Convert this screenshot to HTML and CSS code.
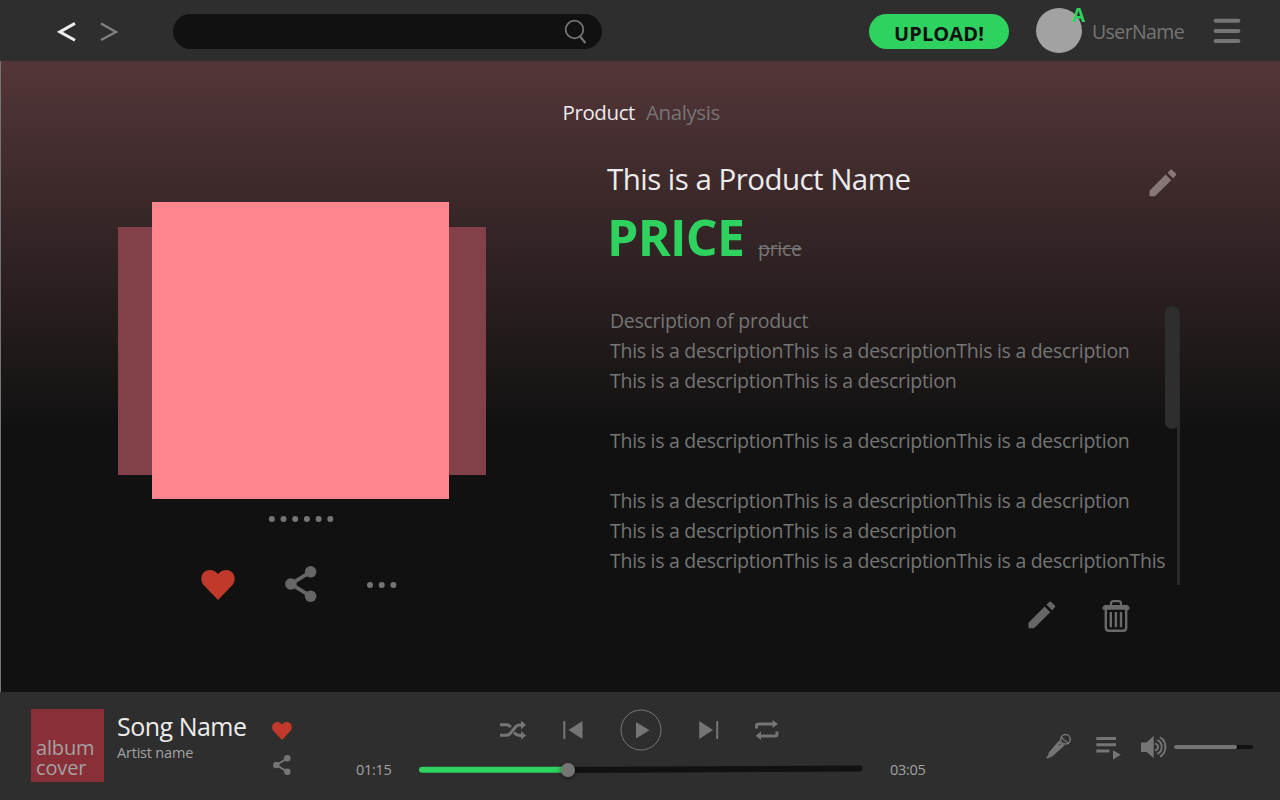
FILE: index.html
```html
<!DOCTYPE html>
<html lang="en">
<head>
<meta charset="utf-8">
<title>Product</title>
<link rel="stylesheet" href="styles.css">
</head>
<body>
<div class="app">
  <header class="topbar">
    <nav class="history">
      <svg width="62" height="20" viewBox="0 0 62 20" fill="none">
        <path d="M18 1.4 2.8 9.9 18 18.2" stroke="#ececec" stroke-width="3"/>
        <path d="M44 1.6 59 9.9 44 18" stroke="#808080" stroke-width="2.3"/>
      </svg>
    </nav>
    <div class="search">
      <svg width="24" height="26" viewBox="0 0 24 26" fill="none" stroke="#757575">
        <circle cx="10.5" cy="10.5" r="8.8" stroke-width="1.8"/>
        <path d="M16 17.5 21.5 24" stroke-width="2.2"/>
      </svg>
    </div>
    <button class="upload"><span>UPLOAD!</span></button>
    <div class="avatar"><span class="badge">A</span></div>
    <span class="username">UserName</span>
    <svg class="menu" width="28" height="26" viewBox="0 0 28 26" stroke="#757575" stroke-width="4" stroke-linecap="round"><path d="M2.6 2.7H25.4M2.6 13H25.4M2.6 23H25.4"/></svg>
  </header>

  <main class="content">
    <nav class="tabs"><span class="tab tab-active">Product</span><span class="tab">Analysis</span></nav>
    <div class="columns">
      <section class="gallery">
        <div class="carousel"><div class="side"></div><div class="front"></div><div class="side side-right"></div></div>
        <svg class="pager" width="66" height="8" viewBox="0 0 66 8" fill="#757575"><circle cx="3.8" cy="4" r="3"/><circle cx="15.5" cy="4" r="3"/><circle cx="27.2" cy="4" r="3"/><circle cx="38.9" cy="4" r="3"/><circle cx="50.6" cy="4" r="3"/><circle cx="62.3" cy="4" r="3"/></svg>
        <div class="actions">
          <svg class="heart" width="34" height="30" viewBox="0 0 34 30"><path fill="#c0392b" d="M17 30 3 15.6C-1 11.2-.2 5 3.2 2.1 7-1.1 13-.6 17 4.2 21-.6 27-1.1 30.8 2.1 34.2 5 35 11.2 31 15.6Z"/></svg>
          <svg class="share" width="32" height="36" viewBox="0 0 32 36"><path d="M26 5.7 5.8 18 26 30.3" fill="none" stroke="#666" stroke-width="3.7"/><g fill="#666"><circle cx="25.6" cy="5.8" r="5.8"/><circle cx="5.8" cy="18" r="5.8"/><circle cx="25.6" cy="30.2" r="5.8"/></g></svg>
          <svg class="more" width="32" height="8" viewBox="0 0 32 8" fill="#757575"><circle cx="4" cy="4" r="3"/><circle cx="15.7" cy="4" r="3"/><circle cx="27.4" cy="4" r="3"/></svg>
        </div>
      </section>
      <section class="details">
        <div class="heading">
          <h1>This is a Product Name</h1>
          <svg width="28" height="28" viewBox="0 0 28 28" fill="#887777"><path d="M.5 21.7 16.6 5.6 22.2 11.2 6 27.3H.5ZM18.5 3.8 21.2 1Q22.2 0 23.2 1L26.8 4.5Q27.8 5.5 26.8 6.5L24 9.3Z"/></svg>
        </div>
        <div class="prices"><strong>PRICE</strong><s>price</s></div>
        <div class="description">
          <div class="copy">
            <p>Description of product</p>
            <p>This is a descriptionThis is a descriptionThis is a description</p>
            <p>This is a descriptionThis is a description</p>
            <p>&nbsp;</p>
            <p>This is a descriptionThis is a descriptionThis is a description</p>
            <p>&nbsp;</p>
            <p>This is a descriptionThis is a descriptionThis is a description</p>
            <p>This is a descriptionThis is a description</p>
            <p>This is a descriptionThis is a descriptionThis is a descriptionThis</p>
          </div>
          <div class="scroll"><div class="thumb"></div></div>
        </div>
        <div class="tools">
          <svg width="28" height="28" viewBox="0 0 28 28" fill="#666"><path d="M.5 21.7 16.6 5.6 22.2 11.2 6 27.3H.5ZM18.5 3.8 21.2 1Q22.2 0 23.2 1L26.8 4.5Q27.8 5.5 26.8 6.5L24 9.3Z"/></svg>
          <svg class="trash" width="28" height="32" viewBox="0 0 28 32" fill="none" stroke="#6a6a6a"><path d="M9 6V3.5Q9 1.2 11.5 1.2H16.5Q19 1.2 19 3.5V6" stroke-width="2.2"/><path d="M2.5 5H25.5L27.4 7V9.8H.6V7Z" fill="#6a6a6a" stroke="none"/><path d="M3.8 9V27.5Q3.8 30.8 7 30.8H21Q24.2 30.8 24.2 27.5V9M8.8 12V27.3M13.9 12V27.3M19 12V27.3" stroke-width="2.4"/></svg>
        </div>
      </section>
    </div>
  </main>

  <footer class="player">
    <div class="cover">album<br>cover</div>
    <div class="song"><div class="song-name">Song Name</div><div class="artist">Artist name</div></div>
    <div class="song-actions">
      <svg width="20" height="18" viewBox="0 0 34 30" preserveAspectRatio="none"><path fill="#c0392b" d="M17 30 3 15.6C-1 11.2-.2 5 3.2 2.1 7-1.1 13-.6 17 4.2 21-.6 27-1.1 30.8 2.1 34.2 5 35 11.2 31 15.6Z"/></svg>
      <svg class="share-small" width="18" height="20" viewBox="0 0 32 36"><path d="M26 5.7 5.8 18 26 30.3" fill="none" stroke="#757575" stroke-width="3.4"/><g fill="#757575"><circle cx="25.6" cy="5.8" r="5.8"/><circle cx="5.8" cy="18" r="5.8"/><circle cx="25.6" cy="30.2" r="5.8"/></g></svg>
    </div>
    <div class="playback">
      <div class="controls">
        <svg class="shuffle" width="26" height="20" viewBox="0 0 26 20"><path d="M0 4.7H6.5Q9 4.7 10.8 7.2M0 15.3H6.5Q9 15.3 11 12.6L15.5 7Q17 5 19.8 5H22M14 12.6Q16.5 15.4 19.8 15.4H22" fill="none" stroke="#757575" stroke-width="3"/><path fill="#757575" d="M21 .5 26 5 21 9.3ZM21 11 26 15.4 21 19.8Z"/></svg>
        <svg class="prev" width="20" height="18" viewBox="0 0 20 18" fill="#757575"><path d="M.3 0H2.3V18H.3ZM19.5 0V18L5.5 9Z"/></svg>
        <svg class="play" width="42" height="42" viewBox="0 0 42 42"><circle cx="21" cy="21" r="20" fill="none" stroke="#757575"/><path fill="#757575" d="M16 13V29.5L29.5 21.2Z"/></svg>
        <svg class="next" width="20" height="18" viewBox="0 0 20 18" fill="#757575"><path d="M17.2 0H19.2V18H17.2ZM.2 0V18L14 9Z"/></svg>
        <svg class="repeat" width="24" height="20" viewBox="0 0 24 20"><path d="M1.5 8.5V6Q1.5 4 3.5 4H18M22 11.5V14Q22 16 20 16H5" fill="none" stroke="#757575" stroke-width="3"/><path fill="#757575" d="M17.5 0 23 3.9 17.5 8ZM6 11.5V20L.5 15.8Z"/></svg>
      </div>
      <div class="timeline">
        <span class="time">01:15</span>
        <svg class="track" width="454" height="28" viewBox="0 0 454 28">
          <defs><filter id="shadow" x="-80%" y="-80%" width="260%" height="260%"><feDropShadow dx="0" dy="1" stdDeviation="2.5" flood-color="#000" flood-opacity=".6"/></filter></defs>
          <path d="M150 14 445.5 12.6" stroke="#111" stroke-width="6" stroke-linecap="round"/>
          <path d="M8 13.7H150" stroke="#2ed25f" stroke-width="6" stroke-linecap="round"/>
          <circle cx="154" cy="14" r="7" fill="#757575" filter="url(#shadow)"/>
        </svg>
        <span class="time">03:05</span>
      </div>
    </div>
    <div class="extras">
      <svg class="mic" width="26" height="26" viewBox="0 0 26 26"><circle cx="19.5" cy="6.3" r="4.8" fill="none" stroke="#757575" stroke-width="1.5"/><path d="M15.3 3.2Q17 7.5 23.2 10" fill="none" stroke="#757575" stroke-width="1.3"/><path fill="#757575" d="M13.5 7Q15 11.5 19 12L6.5 23.3 3.5 24.5 1.5 25.5.2 25 2.3 22 2.8 19.5Z"/><circle cx="13.7" cy="11.7" r=".8" fill="#2e2e2e"/></svg>
      <svg class="queue" width="25" height="24" viewBox="0 0 25 24" fill="#757575"><path d="M.3 1H20V4H.3ZM.3 7.3H20V10.3H.3ZM.3 13.6H13.5V16.6H.3ZM17 14.3V23.5L24.8 18.7Z"/></svg>
      <svg class="speaker" width="26" height="22" viewBox="0 0 26 22"><path fill="#757575" d="M0 6.5H5.5L12.7 0V22L5.5 16H0Z"/><path d="M14 7.6Q17 8.2 17 11T14 14.4M16.2 4Q20.7 6 20.7 11T16.2 18M19 1.2Q24.4 4.5 24.4 11T19 20.8" fill="none" stroke="#757575" stroke-width="1.9"/></svg>
      <div class="volume"><div class="level"></div></div>
    </div>
  </footer>
</div>
</body>
</html>
```
FILE: styles.css
```css
* { box-sizing: border-box; }
body, h1, p { margin: 0; }
body { font-family: "Open Sans", "Noto Sans", sans-serif; color: #757575; background: #111; }
svg { display: block; flex: none; }
.app { width: 1280px; height: 800px; display: flex; flex-direction: column; overflow: hidden; white-space: nowrap; }

.topbar { height: 61px; flex: none; background: #2e2e2e; display: flex; align-items: flex-start; }
.history { padding: 22px 0 0 57px; width: 173px; }
.search { width: 429px; height: 35px; margin-top: 14px; border-radius: 18px; background: #111; display: flex; justify-content: flex-end; padding: 5px 14px 0 0; }
.upload { width: 140px; height: 35px; margin: 14px 0 0 267px; padding: 4px 0 0; border: 0; border-radius: 18px; background: #2ed25f; color: #111; font: 700 20px/30px "Open Sans", sans-serif; letter-spacing: .1px; }
.avatar { position: relative; width: 46px; height: 45px; margin: 8px 0 0 27px; border-radius: 50%; background: #a2a2a2; }
.badge { position: absolute; left: 36px; top: -5px; font: 700 19px/24px "Open Sans", sans-serif; color: #2ed25f; }
.username { width: 121px; margin: 17px 0 0 10px; font-size: 19.5px; line-height: 30px; letter-spacing: -.6px; }
.menu { margin-top: 18px; }

.content { height: 631px; flex: none; border-left: 1px solid #757575; background: linear-gradient(#543638, #111 370px); }
.tabs { display: flex; gap: 11px; padding: 36px 0 0 561.5px; height: 97px; font-size: 20.5px; line-height: 30px; letter-spacing: -.4px; }
.tab-active { color: #ececec; }
.columns { display: flex; }
.gallery { width: 605px; padding: 44px 0 0 117px; }
.carousel { width: 368px; display: flex; align-items: center; }
.side { width: 34px; height: 248px; background: #824048; }
.side-right { width: 37px; }
.front { width: 297px; height: 297px; background: #ff858f; }
.pager { margin: 16px 0 0 150px; }
.actions { display: flex; align-items: flex-start; padding: 43px 0 0 83px; }
.heart { margin-top: 4px; }
.share { margin-left: 50px; }
.more { margin: 15px 0 0 49px; }
.details { width: 574px; padding-top: 1px; }
.heading { display: flex; justify-content: space-between; padding: 0 3px 0 1px; height: 50px; }
.heading svg { margin-top: 10px; }
h1 { font-size: 29.5px; font-weight: 400; line-height: 40px; letter-spacing: -.53px; color: #ececec; }
.prices { display: flex; height: 97px; padding-left: 1px; }
.prices strong { width: 151px; font-size: 50px; line-height: 56px; letter-spacing: -.7px; color: #2ed25f; }
.prices s { font-size: 19.5px; line-height: 30px; margin-top: 25px; letter-spacing: -.3px; }
.description { display: flex; justify-content: space-between; height: 279px; padding-left: 4px; }
.copy { font-size: 19.5px; line-height: 30px; letter-spacing: -.28px; }
.scroll { width: 15px; background: linear-gradient(90deg, transparent 12px, #2b2b2b 12px); border-radius: 7px 7px 0 0; }
.thumb { width: 14px; height: 123px; border-radius: 7px; background: #2e2e2e; }
.tools { display: flex; padding: 16px 0 0 422px; }
.trash { margin: -1px 0 0 46px; }

.player { height: 108px; flex: none; background: #2e2e2e; display: flex; }
.cover { width: 73px; height: 73px; margin: 17px 0 0 31px; padding: 29px 0 0 5px; background: #892f38; color: #a2a2a2; font-size: 20px; line-height: 20px; letter-spacing: -.15px; }
.song { width: 155px; padding: 16px 0 0 13px; }
.song-name { font-size: 25px; line-height: 36px; letter-spacing: -.5px; color: #ececec; }
.artist { font-size: 14.5px; line-height: 18px; color: #a2a2a2; letter-spacing: -.2px; }
.song-actions { width: 97px; padding: 30px 0 0 13px; display: flex; flex-direction: column; gap: 15px; }
.share-small { margin-left: 1px; }
.playback { width: 640px; padding-top: 17px; }
.controls { display: flex; align-items: center; height: 42px; padding-left: 144px; }
.prev { margin-left: 37px; }
.play { margin-left: 37px; }
.next { margin-left: 37px; }
.repeat { margin-left: 36px; }
.timeline { display: flex; padding-top: 5px; }
.time { width: 57px; font-size: 14.5px; line-height: 27px; letter-spacing: -.3px; color: #a2a2a2; }
.track { margin: 0 22px 0 1px; }
.extras { display: flex; padding-top: 41px; margin-left: 50px; }
.queue { margin: 3px 0 0 24px; }
.speaker { margin: 3px 0 0 20px; }
.volume { width: 79px; height: 4px; margin: 11.5px 0 0 6.5px; border-radius: 2px; background: #111; }
.level { width: 63px; height: 4px; border-radius: 2px; background: #757575; }
```
